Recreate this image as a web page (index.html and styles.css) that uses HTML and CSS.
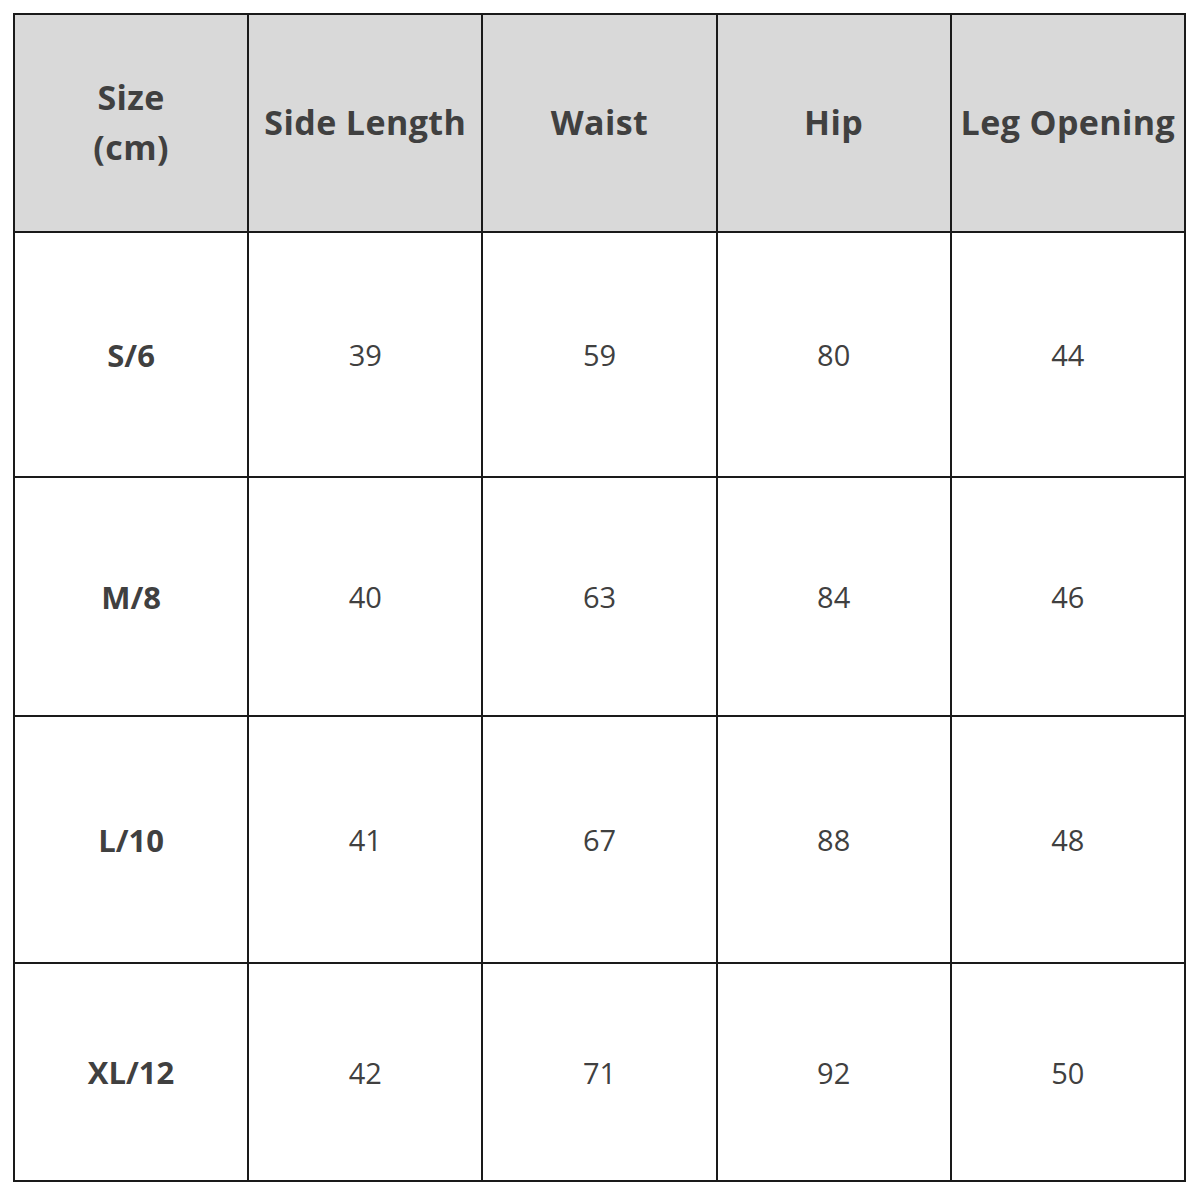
FILE: index.html
```html
<!DOCTYPE html>
<html>
<head>
<meta charset="utf-8">
<link rel="stylesheet" href="styles.css">
</head>
<body>
<table class="size-table">
  <colgroup>
    <col class="c"><col class="c"><col class="c"><col class="c"><col class="c">
  </colgroup>
  <thead>
    <tr class="head">
      <th>Size<br>(cm)</th>
      <th>Side Length</th>
      <th>Waist</th>
      <th>Hip</th>
      <th>Leg Opening</th>
    </tr>
  </thead>
  <tbody>
    <tr class="r1"><th>S/6</th><td>39</td><td>59</td><td>80</td><td>44</td></tr>
    <tr class="r2"><th>M/8</th><td>40</td><td>63</td><td>84</td><td>46</td></tr>
    <tr class="r3"><th>L/10</th><td>41</td><td>67</td><td>88</td><td>48</td></tr>
    <tr class="r4"><th>XL/12</th><td>42</td><td>71</td><td>92</td><td>50</td></tr>
  </tbody>
</table>
</body>
</html>
```
FILE: styles.css
```css
html, body {
  margin: 0;
  padding: 0;
  background: #fff;
}
body {
  padding: 13px 0 0 13px;
  font-family: "Open Sans", "Noto Sans", sans-serif;
  color: #404040;
}
.size-table {
  border-collapse: collapse;
  table-layout: fixed;
  width: 1173px;
}
.size-table .c {
  width: 234px;
}
.size-table th,
.size-table td {
  border: 2px solid #1a1a1a;
  text-align: center;
  vertical-align: middle;
  padding: 0;
}
.head th {
  background: #d9d9d9;
  font-size: 34px;
  font-weight: 700;
  line-height: 50px;
  height: 213px;
  padding-bottom: 3px;
  letter-spacing: 0.4px;
  white-space: nowrap;
}
tbody th {
  font-size: 31px;
  font-weight: 700;
}
tbody td {
  font-size: 29px;
  font-weight: 400;
}
.r1 th, .r1 td { height: 243px; }
.r2 th, .r2 td { height: 237px; }
.r3 th, .r3 td { height: 245px; }
.r4 th, .r4 td { height: 216px; }
```
